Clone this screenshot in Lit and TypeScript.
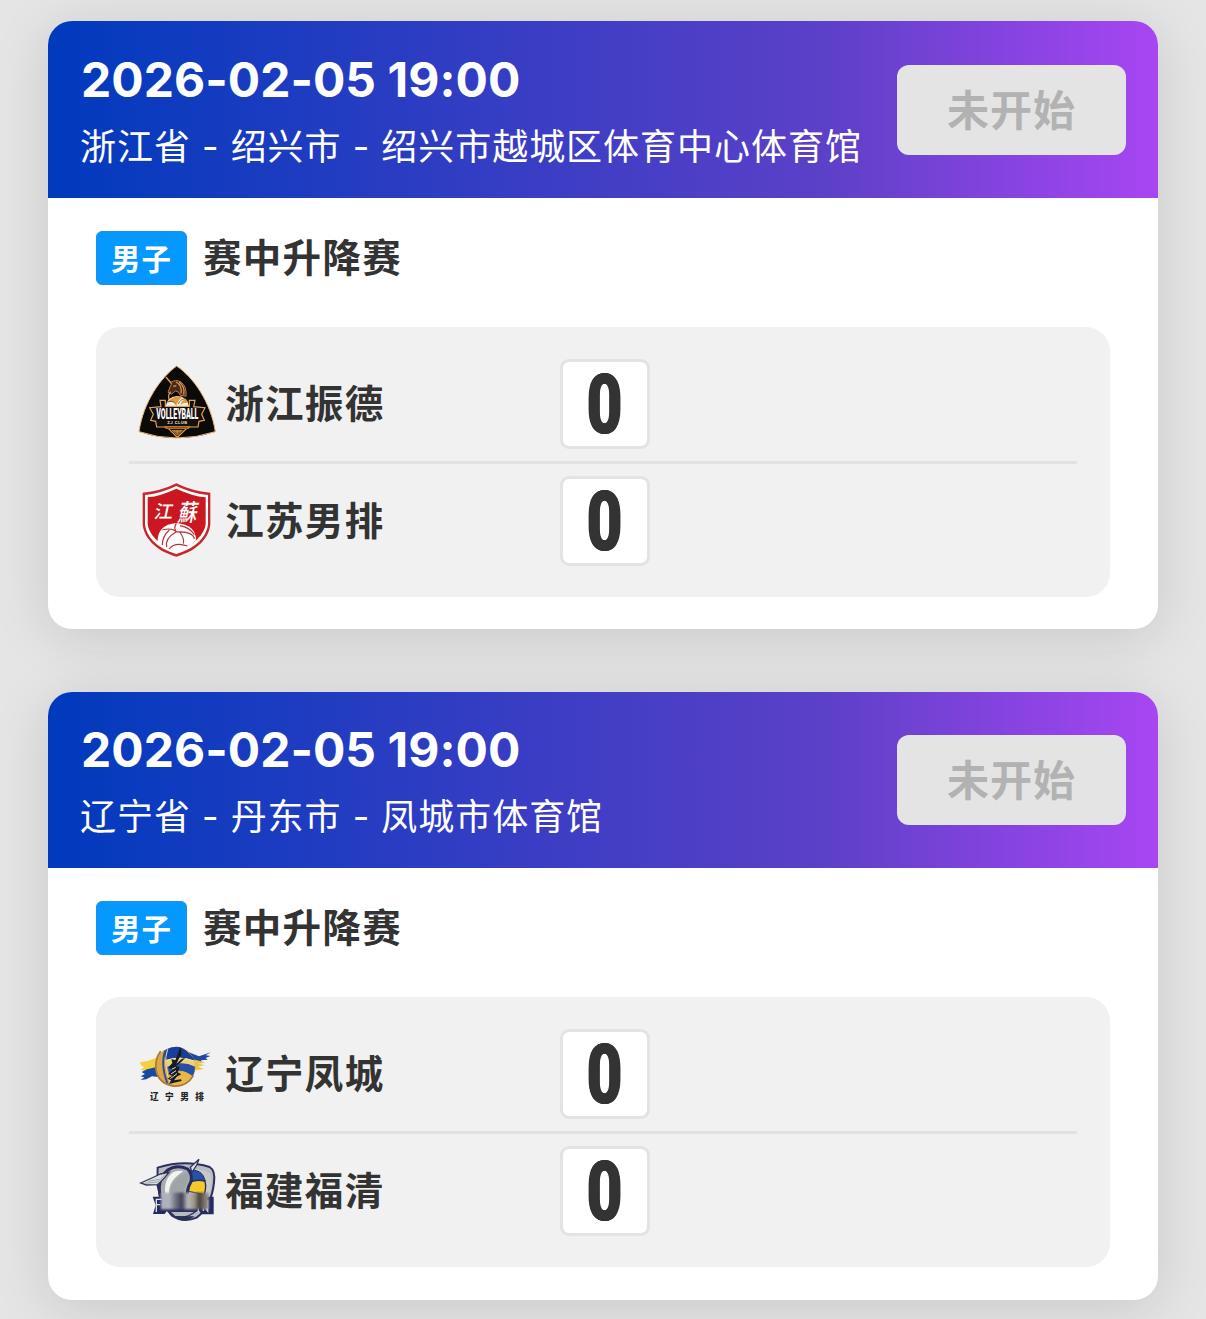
import { LitElement, html, css, svg } from 'lit'
import { customElement, property } from 'lit/decorators.js'

interface Team {
  name: string
  logo: string
  score: number
}

interface Match {
  time: string
  place: string
  status: string
  gender: string
  stage: string
  teams: Team[]
}

const MATCHES: Match[] = [
  {
    time: '2026-02-05 19:00',
    place: '浙江省 - 绍兴市 - 绍兴市越城区体育中心体育馆',
    status: '未开始',
    gender: '男子',
    stage: '赛中升降赛',
    teams: [
      { name: '浙江振德', logo: 'zhejiang', score: 0 },
      { name: '江苏男排', logo: 'jiangsu', score: 0 },
    ],
  },
  {
    time: '2026-02-05 19:00',
    place: '辽宁省 - 丹东市 - 凤城市体育馆',
    status: '未开始',
    gender: '男子',
    stage: '赛中升降赛',
    teams: [
      { name: '辽宁凤城', logo: 'liaoning', score: 0 },
      { name: '福建福清', logo: 'fujian', score: 0 },
    ],
  },
]

const LOGOS: Record<string, { viewBox: string; art: unknown }> = {
  zhejiang: {
    viewBox: '24 30 234 234',
    art: svg`
      <path d="M140 33 C93 67 40 140 27 230 Q140 268 256 230 C242 140 190 67 140 33Z" fill="#0c0a09" stroke="#e9b878" stroke-width="3" />
      <!-- unicorn -->
      <path d="M110 68 L123 82 Q137 72 153 81 Q171 94 168 124 L150 120 Q148 108 136 108 L125 117 L114 112 L120 96 L125 86Z" fill="#4a2b17" stroke="#b9783e" stroke-width="3" />
      <path d="M108 66 L124 86 M138 81 Q157 91 153 115 M147 81 Q166 95 161 119 M130 94 L139 92 M122 110 Q112 120 118 136" fill="none" stroke="#d49556" stroke-width="4" />
      <!-- ball -->
      <path d="M107 154 Q111 126 141 123 Q172 124 177 154Z" fill="#f7f2e8" />
      <path d="M112 142 Q131 120 158 125 Q146 133 141 147 Q124 137 112 142Z M151 150 Q153 137 168 131 L174 143 Q160 142 151 150Z" fill="#e39a35" />
      <path d="M112 142 Q128 132 140 151 M145 147 Q150 132 167 131" fill="none" stroke="#4a2a12" stroke-width="2" />
      <!-- ribbon -->
      <path d="M90 136 L106 136 L106 154 H178 L178 136 L195 136 L191 155 L225 158 L215 178 L223 196 L207 199 L204 216 L174 216 L142 247 L111 216 L80 216 L77 199 L62 196 L70 178 L59 158 L93 155Z" fill="#15100d" stroke="#e0a457" stroke-width="3.5" />
      <g text-anchor="middle" font-family="Roboto, sans-serif">
        <text transform="translate(142 192) scale(.5 1)" font-weight="900" font-size="42" fill="#fff">VOLLEYBALL</text>
        <text transform="translate(142 208)" font-weight="700" font-size="13" letter-spacing="1.5" fill="#f0ddc2">ZJ CLUB</text>
      </g>
      <path d="M100 213 H183 L176 222 H108Z M124 225 H160 L142 242Z" fill="#b77a2e" />
      <path d="M112 218 H172 M134 230 L142 237 L150 230" fill="none" stroke="#513112" stroke-width="2" />
    `,
  },
  jiangsu: {
    viewBox: '24 21 234 234',
    art: svg`
      <path d="M139 25 Q187 49 241 53 V148 C237 196 190 232 139 245 C89 232 42 196 38 148 V53 Q91 49 139 25Z" fill="#c9252c" />
      <path d="M139 33 Q187 56 234 60 V148 C229 193 186 224 139 237 C92 224 50 193 45 148 V60 Q91 56 139 33Z" fill="#fff" />
      <path d="M139 41 Q186 63 227 67 V148 C221 187 180 216 139 229 C99 216 59 187 53 148 V67 Q92 63 139 41Z" fill="#ca1820" />
      <path d="M83 200 Q82 149 139 144 Q198 149 198 196 Q177 218 139 231 Q105 220 83 200Z" fill="#fff" />
      <path d="M97 165 Q125 157 139 170 Q190 170 193 192 M139 145 Q130 160 139 170 M150 152 Q180 158 193 179 M139 170 Q104 190 110 216 M118 165 Q97 184 97 210 M117 222 Q135 200 172 213 M149 171 Q164 190 160 206" fill="none" stroke="#b92f3c" stroke-width="3.5" />
      <g fill="#fff" font-family="Noto Sans CJK SC, sans-serif" font-weight="500">
        <text transform="translate(70 128) skewX(-12) scale(1.05 1)" font-size="54">江</text>
        <text transform="translate(141 137) skewX(-12) scale(.92 1.13)" font-size="63">蘇</text>
      </g>
    `,
  },
  liaoning: {
    viewBox: '24 15 234 234',
    art: svg`
      <!-- paint strokes behind the ball -->
      <path d="M30 97 L52 93 L75 85 L91 88 L88 119 L67 118 L48 123 L32 119 L43 112 L34 107Z" fill="#f6ce42" />
      <path d="M35 126 L51 118 L80 111 L95 128 L86 141 L66 139 L49 148 L32 150 L43 142 L32 139 L45 132Z" fill="#174a9f" />
      <path d="M169 64 L207 79 L243 67 L227 76 L241 78 L227 84 L233 89 L213 91 L215 96 L190 99Z" fill="#22479d" />
      <path d="M175 85 L207 92 L226 98 L205 101 L225 105 L204 110 L221 117 L190 122Z" fill="#edc447" />
      <!-- ball -->
      <circle cx="136" cy="111" r="60" fill="#cf9d48" />
      <path d="M106 60 Q145 39 172 65 Q187 76 194 92 Q140 76 107 91 Q99 78 106 60Z" fill="#183f99" />
      <path d="M94 66 Q75 80 77 113 Q82 146 108 161 Q86 108 107 61Z" fill="#dba849" />
      <path d="M107 91 Q150 75 194 93 L195 110 Q151 91 112 111Z" fill="#eed076" />
      <path d="M112 111 Q153 89 195 110 Q195 127 188 139 Q151 110 118 132Z" fill="#2550a8" />
      <path d="M119 134 Q153 111 188 139 Q165 171 128 168Z" fill="#e7b947" />
      <path d="M106 61 Q90 101 112 160" fill="none" stroke="#2c4c94" stroke-width="5" />
      <path d="M113 58 Q98 95 121 164 M110 91 Q148 77 193 93" fill="none" stroke="#eee4bd" stroke-width="3" />
      <path d="M92 63 Q71 91 80 129 Q91 163 132 168 Q171 170 190 137" fill="none" stroke="#a77a3d" stroke-width="5" />
      <!-- brushed figure -->
      <path d="M151 51 Q159 72 148 83 L139 102 L155 87 L166 83 L151 98 L137 108 L149 112 L143 127 L154 133 L140 140 L132 151 L153 148 L155 153 L116 162 L124 151 L112 146 L126 138 L115 131 L127 121 L116 112 L127 99 L124 87 L136 91Z" fill="#171923" />
      <path d="M137 112 L125 118 M138 122 L123 132 M141 131 L121 146" fill="none" stroke="#e9e3d8" stroke-width="3" />
      <text x="60" y="209" textLength="162" font-family="Noto Sans CJK SC, sans-serif" font-weight="900" font-size="26" fill="#202020">辽宁男排</text>
    `,
  },
  fujian: {
    viewBox: '24 6 234 234',
    art: svg`
      <defs>
        <linearGradient id="smear">
          <stop offset="0" stop-color="#aeb0bb" />
          <stop offset=".18" stop-color="#aeb2bc" />
          <stop offset=".3" stop-color="#767583" />
          <stop offset=".44" stop-color="#3f4058" />
          <stop offset=".56" stop-color="#b9b8b9" />
          <stop offset=".7" stop-color="#9b958c" />
          <stop offset=".8" stop-color="#494137" />
          <stop offset="1" stop-color="#9d9994" />
        </linearGradient>
        <filter id="soften"><feGaussianBlur stdDeviation="3" /></filter>
      </defs>
      <!-- shield -->
      <path d="M83 53 Q163 28 239 51 Q257 62 252 98 Q244 170 200 203 Q160 220 125 196 Q93 164 82 104Z" fill="#b9bdc1" stroke="#2b2f62" stroke-width="6" />
      <path d="M175 60 Q214 53 242 72 Q246 110 236 143 H173Z" fill="#c8cac9" />
      <path d="M177 62 Q216 54 226 93 Q201 86 179 98Z" fill="#2452ac" stroke="#252d5d" stroke-width="3" />
      <path d="M177 98 Q202 87 225 94 Q230 113 222 134 L175 124Z" fill="#f4c928" stroke="#252d5d" stroke-width="4" />
      <!-- helmet with wing and crest -->
      <path d="M181 52 L207 28 L200 45 L186 67Z" fill="#e5e7e8" stroke="#31345c" stroke-width="4" />
      <path d="M93 148 Q77 91 112 61 Q139 42 173 57 Q189 75 182 97 Q169 120 173 144Z" fill="#a9adaf" stroke="#292b60" stroke-width="9" />
      <path d="M107 138 Q98 91 129 67 Q143 59 160 64 Q139 78 129 91 Q115 111 117 139Z" fill="#f2f4f2" />
      <path d="M122 142 Q117 106 144 83 Q157 70 174 67 Q180 89 168 105 Q158 121 161 143Z" fill="#9da5a6" />
      <path d="M91 72 Q62 86 32 99 L49 105 L82 104 Q98 91 117 67Z" fill="#dadfe1" stroke="#353757" stroke-width="4" />
      <path d="M43 100 L83 96 L105 74 M55 94 L88 88" fill="none" stroke="#9ca5ac" stroke-width="3" />
      <!-- name band -->
      <path d="M68 140 H96 V165 H218 V140 H251 V193 H214 L209 184 H110 L104 192 H69 L77 166Z" fill="#252b61" />
      <path d="M79 186 V148 H96 M80 164 H91 M205 186 V165 M220 183 V166 L233 183 V151" fill="none" stroke="#dde1e8" stroke-width="4" />
      <path d="M118 184 H198 Q165 210 134 199Z" fill="#b7bbbf" stroke="#30325f" stroke-width="4" />
      <path d="M130 198 Q160 224 194 199Z" fill="#263153" />
      <rect x="93" y="128" width="143" height="50" fill="url(#smear)" filter="url(#soften)" />
    `,
  },
}

@customElement('match-card')
export class MatchCard extends LitElement {
  @property({ attribute: false }) match!: Match

  static styles = css`
    :host {
      display: block;
      height: 608px;
      border-radius: 24px;
      overflow: hidden;
      background: #fff;
      box-shadow: 0 8px 56px rgba(0, 0, 0, 0.13);
    }

    .header {
      display: flex;
      align-items: center;
      justify-content: space-between;
      box-sizing: border-box;
      height: 176.5px;
      padding: 5px 32px 0;
      color: #fff;
      background: linear-gradient(90deg, #003abd 0%, #5c40c8 70%, #a846f3 100%);
    }

    .time {
      padding-left: 1px;
      font-size: 48px;
      line-height: 58px;
      font-weight: 680;
      letter-spacing: 0.05px;
    }

    .place {
      margin-top: 12px;
      font-size: 36px;
      line-height: 52px;
      letter-spacing: 0.97px;
      white-space: nowrap;
    }

    .status {
      display: flex;
      align-items: center;
      justify-content: center;
      box-sizing: border-box;
      width: 229px;
      height: 90px;
      margin-bottom: 5px;
      padding-bottom: 4px;
      border-radius: 12px;
      background: #e4e4e4;
      color: #b2b2b2;
      font-size: 42px;
      font-weight: 700;
      letter-spacing: 1px;
    }

    .body {
      padding: 33px 48px 0;
    }

    .stage {
      display: flex;
      align-items: center;
      gap: 16px;
      height: 54px;
      color: #333;
      font-size: 38.5px;
      font-weight: 700;
      letter-spacing: 1.3px;
    }

    .stage-name {
      padding-bottom: 6px;
    }

    .gender {
      display: flex;
      align-items: center;
      justify-content: center;
      box-sizing: border-box;
      width: 91px;
      height: 54px;
      padding-bottom: 2px;
      border: 1px solid #1c92ec;
      border-radius: 6px;
      background: #0598ff;
      color: #fff;
      font-size: 29.5px;
      letter-spacing: 1px;
    }

    .teams {
      box-sizing: border-box;
      height: 270px;
      margin-top: 42px;
      padding: 32px 33px;
      border-radius: 24px;
      background: #f1f1f1;
    }

    .team {
      display: grid;
      grid-template-columns: 78px 325.5px 90px;
      column-gap: 9.25px;
      align-items: center;
      height: 90px;
      padding-left: 9px;
    }

    .team + .team {
      margin-top: 12px;
      padding-top: 12px;
      border-top: 3px solid #e2e2e2;
    }

    .logo {
      display: block;
      width: 78px;
      height: 78px;
      overflow: visible;
    }

    .name {
      padding-bottom: 6px;
      color: #333;
      font-size: 38.5px;
      font-weight: 700;
      letter-spacing: 1.3px;
    }

    .score {
      display: flex;
      align-items: center;
      justify-content: center;
      box-sizing: border-box;
      width: 90px;
      height: 90px;
      border: 3px solid #e3e3e3;
      border-radius: 9px;
      background: #fff;
    }

    /* tall condensed digit */
    .digit {
      padding-top: 2px;
      padding-right: 1px;
      color: #333;
      font-family: Roboto, sans-serif;
      font-size: 84px;
      line-height: 84px;
      font-weight: 900;
      text-shadow: -0.7px 0 #333, 0.7px 0 #333;
      transform: scaleX(0.74);
    }
  `

  render() {
    const { time, place, status, gender, stage, teams } = this.match
    return html`
      <div class="header">
        <div>
          <div class="time">${time}</div>
          <div class="place">${place}</div>
        </div>
        <div class="status">${status}</div>
      </div>
      <div class="body">
        <div class="stage">
          <span class="gender">${gender}</span>
          <span class="stage-name">${stage}</span>
        </div>
        <div class="teams">
          ${teams.map(
            (team) => html`
              <div class="team">
                <svg class="logo" viewBox=${LOGOS[team.logo].viewBox}>${LOGOS[team.logo].art}</svg>
                <span class="name">${team.name}</span>
                <div class="score"><span class="digit">${team.score}</span></div>
              </div>
            `
          )}
        </div>
      </div>
    `
  }
}

@customElement('app-root')
export class AppRoot extends LitElement {
  static styles = css`
    :host {
      display: flex;
      flex-direction: column;
      gap: 62.33px;
      box-sizing: border-box;
      height: 1319px;
      padding: 21.3px 48px 0;
      overflow: hidden;
      background: #e5e5e5;
      font-family: Inter, 'Noto Sans CJK SC', sans-serif;
    }

    match-card {
      flex: none;
    }
  `

  render() {
    return html`${MATCHES.map((match) => html`<match-card .match=${match}></match-card>`)}`
  }
}
